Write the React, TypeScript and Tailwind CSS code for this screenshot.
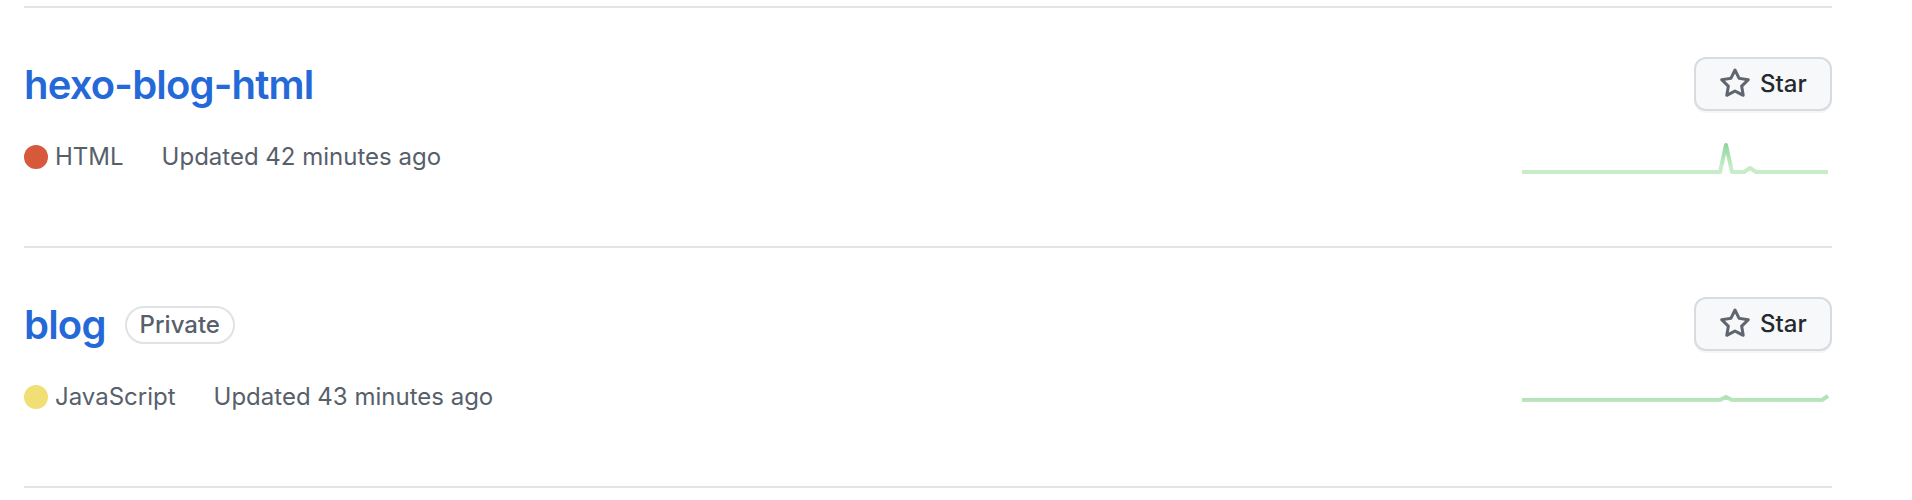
import React from "react";

type Repo = {
  name: string;
  isPrivate?: boolean;
  language: string;
  langColor: string;
  updated: string;
  points: [number, number][];
};

const repos: Repo[] = [
  {
    name: "hexo-blog-html",
    language: "HTML",
    langColor: "#d5593a",
    updated: "Updated 42 minutes ago",
    points: [[0, 41], [198, 41], [204, 14], [210, 41], [222, 41], [228, 37], [234, 41], [306, 41]],
  },
  {
    name: "blog",
    isPrivate: true,
    language: "JavaScript",
    langColor: "#efdf74",
    updated: "Updated 43 minutes ago",
    points: [[0, 29], [198, 29], [204, 26], [210, 29], [300, 29], [306, 25]],
  },
];

function StarIcon() {
  return (
    <svg width="32" height="32" viewBox="0 0 16 16" fill="#5f6670">
      <path d="M8 .25a.75.75 0 0 1 .673.418l1.882 3.815 4.21.612a.75.75 0 0 1 .416 1.279l-3.046 2.97.719 4.192a.751.751 0 0 1-1.088.791L8 12.347l-3.766 1.98a.75.75 0 0 1-1.088-.79l.72-4.194L.818 6.374a.75.75 0 0 1 .416-1.28l4.21-.611L7.327.668A.75.75 0 0 1 8 .25Zm0 2.445L6.615 5.5a.75.75 0 0 1-.564.41l-3.097.45 2.24 2.184a.75.75 0 0 1 .216.664l-.528 3.084 2.769-1.456a.75.75 0 0 1 .698 0l2.77 1.456-.53-3.084a.75.75 0 0 1 .216-.664l2.24-2.183-3.096-.45a.75.75 0 0 1-.564-.41L8 2.694Z" />
    </svg>
  );
}

function Sparkline({ id, points }: { id: string; points: [number, number][] }) {
  const d = points.map(([x, y], i) => `${i === 0 ? "M" : "L"}${x} ${y}`).join(" ");
  return (
    <svg width="310" height="60" viewBox="0 0 310 60" className="block">
      <defs>
        <linearGradient id={id} gradientUnits="userSpaceOnUse" x1="0" y1="44" x2="0" y2="10">
          <stop offset="0%" stopColor="#c6ecc8" />
          <stop offset="25%" stopColor="#c6ecc8" />
          <stop offset="100%" stopColor="#8ad197" />
        </linearGradient>
      </defs>
      <path d={d} fill="none" stroke={`url(#${id})`} strokeWidth="4" strokeLinejoin="round" />
    </svg>
  );
}

function RepoRow({ repo, idx }: { repo: Repo; idx: number }) {
  return (
    <li className="flex h-[240px] justify-between border-t-2 border-[#e1e4e8]">
      <div className="pt-[52px]">
        <div className="flex items-center gap-[19px]">
          <a className="text-[40px] leading-[50px] font-semibold tracking-[-0.8px] text-[#2469d7]">{repo.name}</a>
          {repo.isPrivate && (
            <span className="rounded-full border-2 border-[#dfe2e6] px-[13px] text-[24px] leading-[34px] font-medium text-[#57606a]">
              Private
            </span>
          )}
        </div>
        <div className="mt-[29px] flex items-center text-[24px] leading-[36px] text-[#57606a]">
          <span className="mr-[7px] h-[24px] w-[24px] rounded-full" style={{ backgroundColor: repo.langColor }} />
          <span className="mr-[38px]">{repo.language}</span>
          <span>{repo.updated}</span>
        </div>
      </div>
      <div className="flex flex-col items-end pt-[49px]">
        <button className="flex h-[54px] w-[138px] items-center gap-[9px] rounded-[12px] border-2 border-[#d8dbdf] bg-[#f6f8fa] pl-[23px] text-[24px] font-medium text-[#24292f] shadow-[0_2px_0_rgba(31,35,40,0.04)]">
          <StarIcon />
          Star
        </button>
        <div className="mt-[20px]">
          <Sparkline id={`spark-${idx}`} points={repo.points} />
        </div>
      </div>
    </li>
  );
}

export default function App() {
  return (
    <div className="h-[500px] w-[1912px] overflow-hidden bg-white pt-[6px] font-['Inter',sans-serif]">
      <ul className="ml-[24px] w-[1808px]">
        {repos.map((r, i) => (
          <RepoRow key={r.name} repo={r} idx={i} />
        ))}
        <li className="border-t-2 border-[#e1e4e8]" />
      </ul>
    </div>
  );
}
